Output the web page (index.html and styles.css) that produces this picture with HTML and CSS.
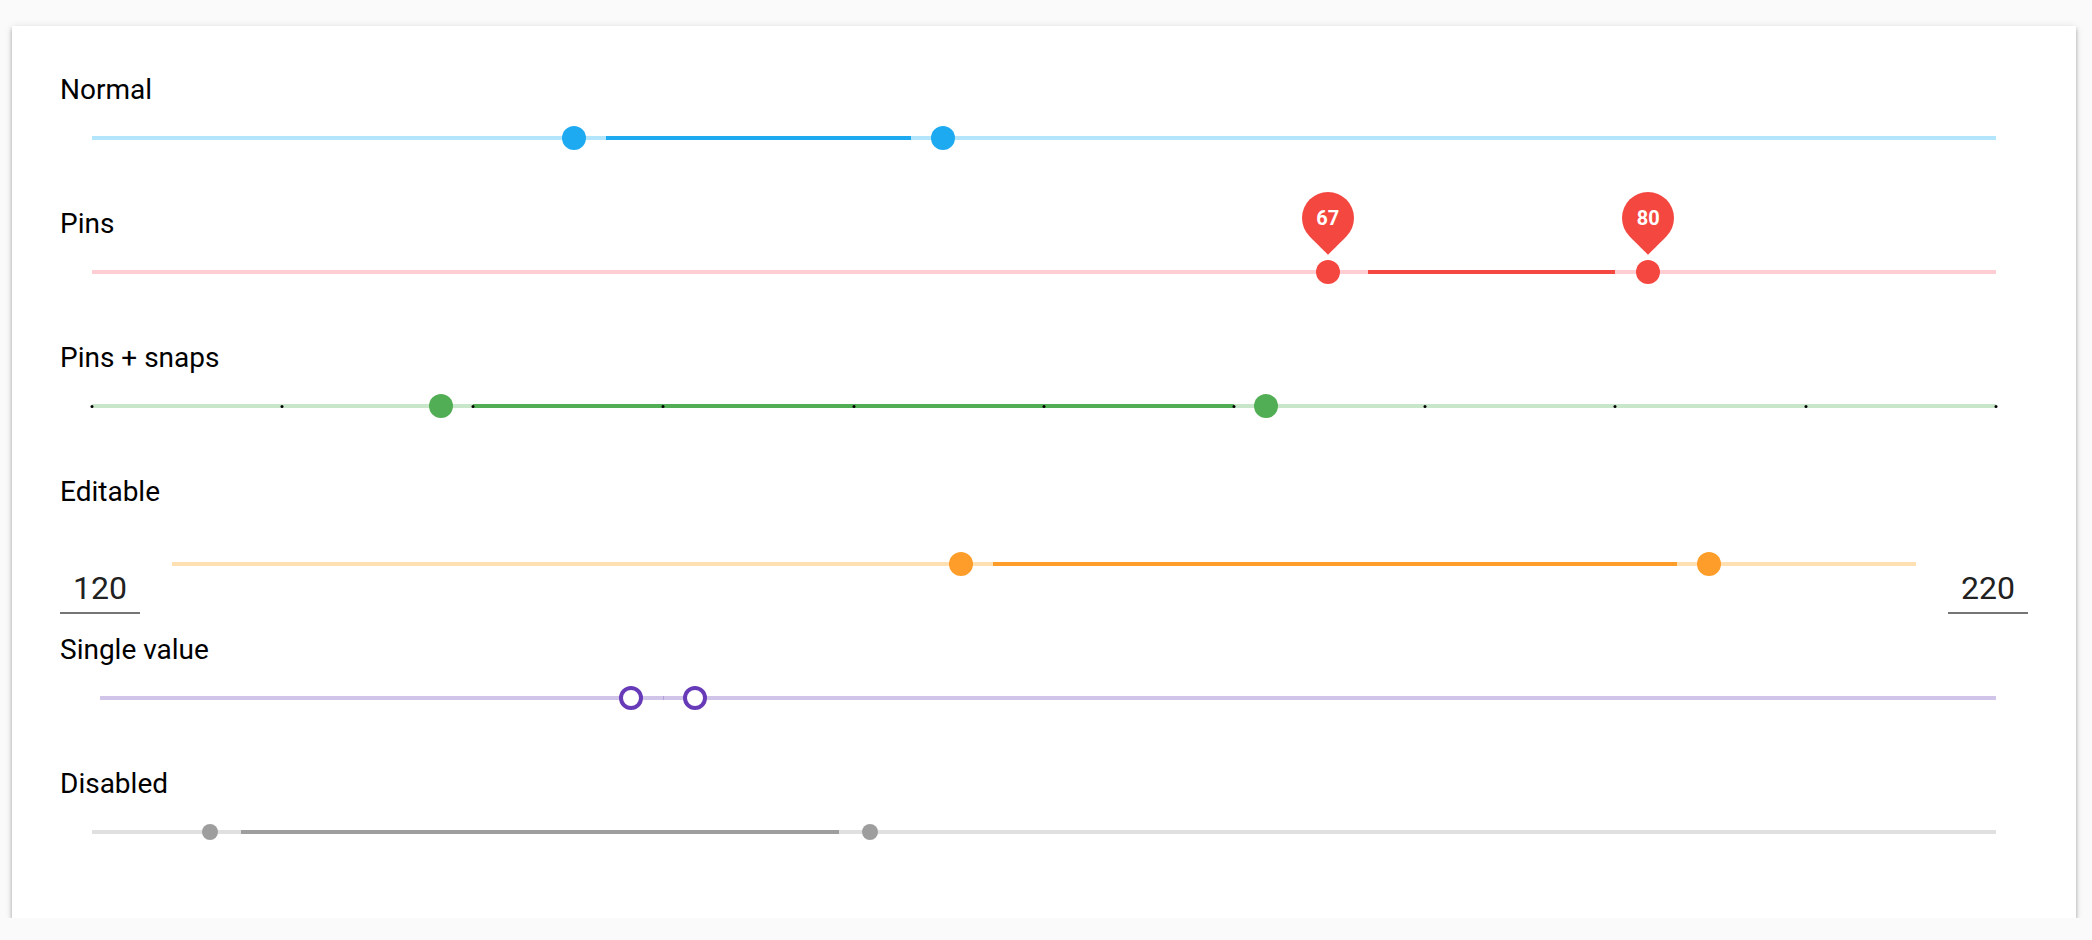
FILE: index.html
```html
<!DOCTYPE html>
<html lang="en">
<head>
<meta charset="utf-8">
<title>Sliders</title>
<link rel="stylesheet" href="styles.css">
</head>
<body>
<div class="card">

  <div class="row">
    <div class="label">Normal</div>
    <div class="slider blue">
      <div class="track">
        <div class="active" style="left:27%;width:16%"></div>
        <div class="thumb" style="left:calc(27% - 32px)"></div>
        <div class="thumb" style="left:calc(43% + 32px)"></div>
      </div>
    </div>
  </div>

  <div class="row">
    <div class="label">Pins</div>
    <div class="slider red">
      <div class="track">
        <div class="active" style="left:67%;width:13%"></div>
        <div class="thumb" style="left:calc(67% - 40px)"></div>
        <div class="thumb" style="left:calc(80% + 33px)"></div>
        <div class="pin" style="left:calc(67% - 40px)"><span class="pin-shape"></span><span class="pin-text">67</span></div>
        <div class="pin" style="left:calc(80% + 33px)"><span class="pin-shape"></span><span class="pin-text">80</span></div>
      </div>
    </div>
  </div>

  <div class="row">
    <div class="label">Pins + snaps</div>
    <div class="slider green">
      <div class="track">
        <div class="active" style="left:20%;width:40%"></div>
        <div class="dot" style="left:0%"></div>
        <div class="dot" style="left:10%"></div>
        <div class="dot" style="left:20%"></div>
        <div class="dot" style="left:30%"></div>
        <div class="dot" style="left:40%"></div>
        <div class="dot" style="left:50%"></div>
        <div class="dot" style="left:60%"></div>
        <div class="dot" style="left:70%"></div>
        <div class="dot" style="left:80%"></div>
        <div class="dot" style="left:90%"></div>
        <div class="dot" style="left:100%"></div>
        <div class="thumb" style="left:calc(20% - 32px)"></div>
        <div class="thumb" style="left:calc(60% + 32px)"></div>
      </div>
    </div>
  </div>

  <div class="row row-editable">
    <div class="label">Editable</div>
    <div class="controls">
      <input class="num" type="text" value="120">
      <div class="slider orange slider-editable">
        <div class="track">
          <div class="active" style="left:47.06%;width:39.21%"></div>
          <div class="thumb" style="left:calc(47.06% - 32px)"></div>
          <div class="thumb" style="left:calc(86.27% + 32px)"></div>
        </div>
      </div>
      <input class="num" type="text" value="220">
    </div>
  </div>

  <div class="row">
    <div class="label">Single value</div>
    <div class="slider purple">
      <div class="track track-single">
        <div class="tick" style="left:29.7%"></div>
        <div class="thumb ring" style="left:calc(29.7% - 32px)"></div>
        <div class="thumb ring" style="left:calc(29.7% + 32px)"></div>
      </div>
    </div>
  </div>

  <div class="row row-last">
    <div class="label">Disabled</div>
    <div class="slider gray">
      <div class="track">
        <div class="active" style="left:7.83%;width:31.4%"></div>
        <div class="thumb thumb-small" style="left:calc(7.83% - 31px)"></div>
        <div class="thumb thumb-small" style="left:calc(39.23% + 31px)"></div>
      </div>
    </div>
  </div>

</div>
</body>
</html>
```

FILE: styles.css
```css
html, body {
  margin: 0;
  padding: 0;
}

body {
  background: #fafafa;
  font-family: Roboto, "Liberation Sans", Arial, sans-serif;
}

.card {
  margin: 26px 16px 0 12px;
  padding: 48px 48px 54px 48px;
  background: #ffffff;
  box-shadow: 0 3px 4px rgba(0, 0, 0, 0.32), 0 1px 8px rgba(0, 0, 0, 0.10);
}

.row {
  display: flex;
  flex-direction: column;
  margin-bottom: 38px;
}

.row-editable {
  margin-bottom: 20px;
}

.row-last {
  margin-bottom: 0;
}

.label {
  height: 32px;
  font-size: 28px;
  line-height: 32px;
  color: #000000;
}

.slider {
  height: 64px;
  padding: 0 32px;
  display: flex;
  align-items: center;
}

.track {
  position: relative;
  flex: 1;
  height: 4px;
}

.track-single {
  margin-left: 8px;
}

.active {
  position: absolute;
  top: 0;
  height: 4px;
}

.thumb {
  position: absolute;
  top: 2px;
  width: 24px;
  height: 24px;
  border-radius: 50%;
  transform: translate(-50%, -50%);
  z-index: 2;
}

.thumb-small {
  width: 16px;
  height: 16px;
}

.ring {
  box-sizing: border-box;
  background: #ffffff;
  border: 4px solid #673ab7;
}

.tick {
  position: absolute;
  top: 0;
  width: 1px;
  height: 4px;
  background: #b39ddb;
}

.dot {
  position: absolute;
  top: 0.5px;
  width: 3px;
  height: 3px;
  border-radius: 50%;
  background: #000000;
  transform: translateX(-50%);
  z-index: 1;
}

.pin {
  position: absolute;
  top: -52px;
  width: 52px;
  height: 52px;
  transform: translate(-50%, -50%);
  display: flex;
  align-items: center;
  justify-content: center;
  z-index: 3;
}

.pin-shape {
  position: absolute;
  inset: 0;
  background: #f44740;
  border-radius: 50% 50% 50% 0;
  transform: rotate(-45deg);
}

.pin-text {
  position: relative;
  color: #ffffff;
  font-size: 20px;
  font-weight: 700;
  line-height: 1;
}

.controls {
  display: flex;
  align-items: flex-start;
  height: 106px;
}

.slider-editable {
  flex: 1;
  margin-top: 24px;
}

.num {
  box-sizing: border-box;
  width: 80px;
  height: 50px;
  margin: 56px 0 0 0;
  padding: 0;
  border: none;
  border-bottom: 2px solid #757575;
  outline: none;
  background: transparent;
  font-family: Roboto, "Liberation Sans", Arial, sans-serif;
  font-size: 32px;
  color: #212121;
  text-align: center;
}

/* colour themes */
.blue .track { background: #b3e5fc; }
.blue .active, .blue .thumb { background: #1eaaf1; }

.red .track { background: #ffcdd2; }
.red .active, .red .thumb { background: #f44740; }

.green .track { background: #c8e6c9; }
.green .active, .green .thumb { background: #52ae54; }

.orange .track { background: #ffe0b2; }
.orange .active, .orange .thumb { background: #ff9d2a; }

.purple .track { background: #d1c4e9; }

.gray .track { background: #e0e0e0; }
.gray .active, .gray .thumb { background: #9e9e9e; }
```
